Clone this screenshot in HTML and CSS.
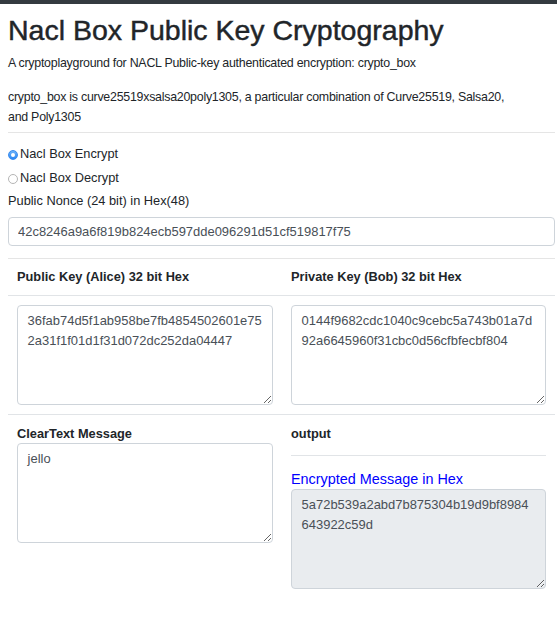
FILE: index.html
```html
<!DOCTYPE html>
<html lang="en">
<head>
<meta charset="utf-8">
<title>Nacl Box Public Key Cryptography</title>
<link rel="stylesheet" href="styles.css">
</head>
<body>
<div class="topbar"></div>
<main class="page">
  <h1 class="title">Nacl Box Public Key Cryptography</h1>
  <p class="lead">A cryptoplayground for NACL Public-key authenticated encryption: crypto_box</p>
  <p class="desc">crypto_box is curve25519xsalsa20poly1305, a particular combination of Curve25519, Salsa20, and Poly1305</p>
  <hr class="rule rule-top">
  <div class="radios">
    <label class="radio"><input class="radio-input" type="radio" name="mode" checked><span>Nacl Box Encrypt</span></label>
    <label class="radio"><input class="radio-input" type="radio" name="mode"><span>Nacl Box Decrypt</span></label>
  </div>
  <label class="field-label" for="nonce">Public Nonce (24 bit) in Hex(48)</label>
  <input id="nonce" class="form-control" type="text" value="42c8246a9a6f819b824ecb597dde096291d51cf519817f75">
  <hr class="rule rule-mid">
  <div class="grid">
    <div class="cell cell-left head">Public Key (Alice) 32 bit Hex</div>
    <div class="cell cell-right head">Private Key (Bob) 32 bit Hex</div>
    <div class="cell cell-left boxrow"><textarea class="area">36fab74d5f1ab958be7fb4854502601e752a31f1f01d1f31d072dc252da04447</textarea></div>
    <div class="cell cell-right boxrow"><textarea class="area">0144f9682cdc1040c9cebc5a743b01a7d92a6645960f31cbc0d56cfbfecbf804</textarea></div>
    <div class="cell cell-left lastrow">
      <div class="bold-label">ClearText Message</div>
      <textarea class="area">jello</textarea>
    </div>
    <div class="cell cell-right lastrow">
      <div class="bold-label output-head">output</div>
      <h5 class="enc-title">Encrypted Message in Hex</h5>
      <textarea class="area readonly" readonly>5a72b539a2abd7b875304b19d9bf8984643922c59d</textarea>
    </div>
  </div>
</main>
</body>
</html>
```

FILE: styles.css
```css
* { box-sizing: border-box; }

html, body {
  margin: 0;
  padding: 0;
  background: #fff;
}

body {
  font-family: "Liberation Sans", Arial, sans-serif;
  font-size: 12.8px;
  line-height: 20px;
  color: #212529;
}

.topbar {
  height: 4px;
  background: #343a40;
}

.page {
  padding: 0 2px 0 8px;
}

.title {
  margin: 7px 0 0;
  font-size: 28.5px;
  line-height: 38px;
  font-weight: 400;
  -webkit-text-stroke: 0.45px #212529;
  color: #212529;
}

.lead,
.desc {
  font-size: 12.4px;
  letter-spacing: -0.25px;
}

.lead {
  margin: 4px 0 0;
}

.desc {
  margin: 14px 0 0;
  max-width: 515px;
}

.rule {
  border: 0;
  border-top: 1px solid #e5e5e5;
  margin: 0;
  height: 0;
}

.rule-top { margin-top: 5px; }
.rule-mid { margin-top: 12px; }

.radios {
  display: flex;
  flex-direction: column;
  gap: 4px;
  margin-top: 11px;
}

.radio {
  display: flex;
  align-items: center;
  height: 20px;
}

.radio-input {
  appearance: none;
  -webkit-appearance: none;
  width: 10px;
  height: 10px;
  margin: 1px 2px 0 0;
  border-radius: 50%;
  border: 1px solid #b5b5b5;
  background: #fff;
  position: relative;
  flex: none;
}

.radio-input:checked {
  border-color: #3a8cef;
  background: linear-gradient(#6cb3fa, #2a86f3);
}

.radio-input:checked::after {
  content: "";
  position: absolute;
  left: 2px;
  top: 2px;
  width: 4px;
  height: 4px;
  border-radius: 50%;
  background: #fff;
}

.field-label {
  display: block;
  margin-top: 3px;
}

.form-control {
  display: block;
  width: 547px;
  height: 29px;
  margin-top: 6px;
  padding: 0 9px;
  font: inherit;
  font-size: 12.96px;
  color: #495057;
  border: 1px solid #ced4da;
  border-radius: 4px;
  background: #fff;
}

.grid {
  display: grid;
  grid-template-columns: 273px 274px;
  width: 547px;
}

.cell-left { padding-left: 9px; padding-right: 8px; }
.cell-right { padding-left: 10px; padding-right: 9px; }

.head {
  height: 37px;
  display: flex;
  align-items: center;
  font-weight: 700;
  border-bottom: 1px solid #e1e4e7;
}

.boxrow {
  padding-top: 9px;
  padding-bottom: 9px;
  border-bottom: 1px solid #e1e4e7;
}

.lastrow {
  padding-top: 9px;
}

.bold-label {
  font-weight: 700;
  line-height: 19px;
}

.output-head {
  padding-bottom: 12px;
  border-bottom: 1px solid #e1e4e7;
}

.enc-title {
  margin: 13px 0 0;
  font-size: 14.4px;
  line-height: 20px;
  font-weight: 400;
  color: #0000ff;
}

.area {
  display: block;
  width: 100%;
  height: 100px;
  margin: 0;
  padding: 5px 9.6px;
  font-family: "Liberation Sans", Arial, sans-serif;
  font-size: 12.96px;
  line-height: 20px;
  color: #495057;
  border: 1px solid #ced4da;
  border-radius: 4px;
  background: #fff;
  resize: vertical;
  overflow: hidden;
}

.readonly {
  background: #e9ecef;
}
```
